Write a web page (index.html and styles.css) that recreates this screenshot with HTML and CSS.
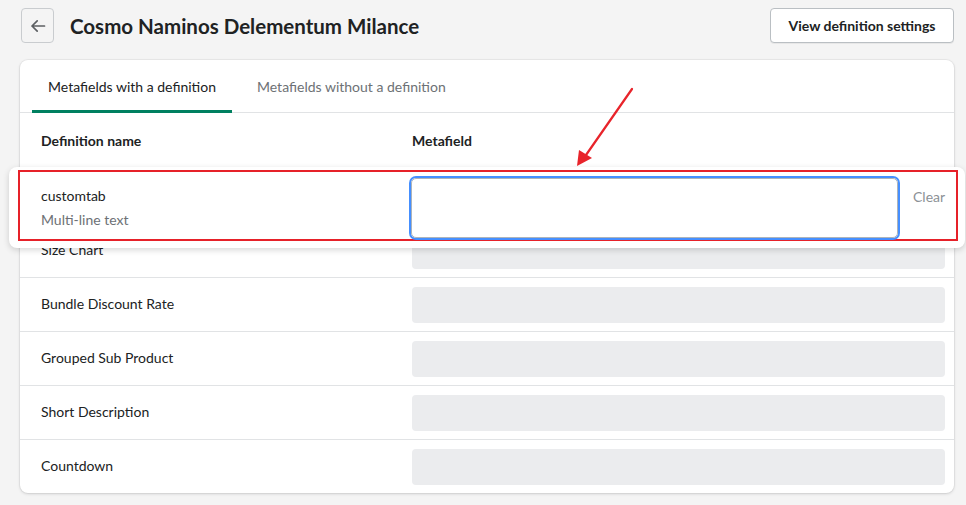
FILE: index.html
```html
<!DOCTYPE html>
<html lang="en">
<head>
<meta charset="utf-8">
<title>Cosmo Naminos Delementum Milance</title>
<link rel="stylesheet" href="styles.css">
</head>
<body>
<div class="page">
  <header class="topbar">
    <button class="back-btn" aria-label="Back">
      <svg width="18" height="18" viewBox="0 0 18 18"><path d="M15.5 9H3M8.2 3.8L3 9l5.2 5.2" fill="none" stroke="#5c5f62" stroke-width="1.7" stroke-linecap="round" stroke-linejoin="round"/></svg>
    </button>
    <h1 class="title">Cosmo Naminos Delementum Milance</h1>
    <button class="settings-btn">View definition settings</button>
  </header>

  <section class="card">
    <nav class="tabs">
      <div class="tab tab-active">Metafields with a definition</div>
      <div class="tab">Metafields without a definition</div>
    </nav>
    <div class="row row-head">
      <div class="col-name">Definition name</div>
      <div class="col-field">Metafield</div>
    </div>
    <div class="row row-focus">
      <div class="popup">
        <div class="popup-frame">
          <div class="popup-name">
            <div class="name">customtab</div>
            <div class="type">Multi-line text</div>
          </div>
          <div class="popup-input"></div>
          <div class="clear">Clear</div>
        </div>
      </div>
    </div>
    <div class="row"><div class="col-name">Size Chart</div><div class="field"></div></div>
    <div class="row"><div class="col-name">Bundle Discount Rate</div><div class="field"></div></div>
    <div class="row"><div class="col-name">Grouped Sub Product</div><div class="field"></div></div>
    <div class="row"><div class="col-name">Short Description</div><div class="field"></div></div>
    <div class="row"><div class="col-name">Countdown</div><div class="field"></div></div>
  </section>

  <svg class="arrow" width="966" height="505" viewBox="0 0 966 505">
    <line x1="632" y1="89" x2="586" y2="155" stroke="#e8242b" stroke-width="2.2" stroke-linecap="round"/>
    <polygon points="577,166 579,150 592,158" fill="#e8242b"/>
  </svg>
</div>
</body>
</html>
```
FILE: styles.css
```css
* { box-sizing: border-box; }
html, body { margin: 0; padding: 0; }
body {
  background: #f4f4f4;
  font-family: "Lato", "Open Sans", sans-serif;
  font-size: 14px;
  color: #202223;
}
.page {
  position: relative;
  width: 966px;
  height: 505px;
  padding: 8px 12px 0 20px;
}
.topbar {
  display: flex;
  align-items: center;
  height: 35px;
}
.back-btn {
  width: 33px;
  height: 35px;
  margin-left: 1px;
  border: 1px solid #c9cccf;
  border-radius: 4px;
  background: transparent;
  display: flex;
  align-items: center;
  justify-content: center;
  padding: 0;
}
.title {
  margin: 0 0 0 16px;
  font-size: 20.5px;
  font-weight: 700;
  color: #202223;
  flex: 1;
}
.settings-btn {
  width: 184px;
  height: 35px;
  border: 1px solid #babfc3;
  border-radius: 4px;
  background: #fff;
  font-family: inherit;
  font-size: 14px;
  font-weight: 700;
  color: #202223;
  box-shadow: 0 1px 0 rgba(0,0,0,0.05);
}
.card {
  margin-top: 17px;
  width: 934px;
  background: #fff;
  border-radius: 8px;
  box-shadow: 0 0 0 1px rgba(63,63,68,0.05), 0 1px 3px rgba(63,63,68,0.18);
}
.tabs {
  display: flex;
  height: 53px;
  padding-left: 12px;
  border-bottom: 1px solid #e1e3e5;
}
.tab {
  display: flex;
  align-items: center;
  justify-content: center;
  padding: 0 16px;
  color: #6d7175;
  margin-right: 9px;
  height: 53px;
}
.tab-active {
  width: 200px;
  color: #202223;
  box-shadow: inset 0 -3px 0 #008060;
}
.row {
  display: flex;
  align-items: center;
  height: 54px;
  padding: 9px 9px 8px 21px;
  border-top: 1px solid #e1e3e5;
}
.row-head {
  border-top: none;
  padding-top: 0;
  padding-bottom: 0;
  font-weight: 700;
}
.row-focus {
  position: relative;
  height: 56px;
  border-top: none;
  padding: 0;
}
.col-name {
  width: 371px;
  flex: none;
  margin-top: -3px;
}
.row-head .col-name,
.row-head .col-field { margin-top: 0; }
.field {
  flex: 1;
  height: 36px;
  background: #ebecee;
  border-radius: 4px;
}
.popup {
  position: absolute;
  left: -11px;
  top: 0;
  width: 956px;
  height: 81px;
  background: #fff;
  border-radius: 8px;
  box-shadow: 0 2px 6px rgba(0,0,0,0.16);
  padding: 3px 7px 7px 9px;
}
.popup-frame {
  height: 71px;
  border: 2px solid #e62129;
  display: flex;
  align-items: center;
  padding-left: 21px;
}
.popup-name {
  width: 370px;
  flex: none;
  line-height: 24px;
  margin-top: 4px;
}
.type { color: #6d7175; }
.popup-input {
  width: 487px;
  height: 60px;
  margin-top: 4px;
  border: 1px solid #aeb4b9;
  border-radius: 5px;
  box-shadow: 0 0 0 2px #458fff;
}
.clear {
  margin-left: 15px;
  color: #8c9196;
  align-self: flex-start;
  margin-top: 16px;
}
.arrow {
  position: absolute;
  left: 0;
  top: 0;
  pointer-events: none;
}
```
